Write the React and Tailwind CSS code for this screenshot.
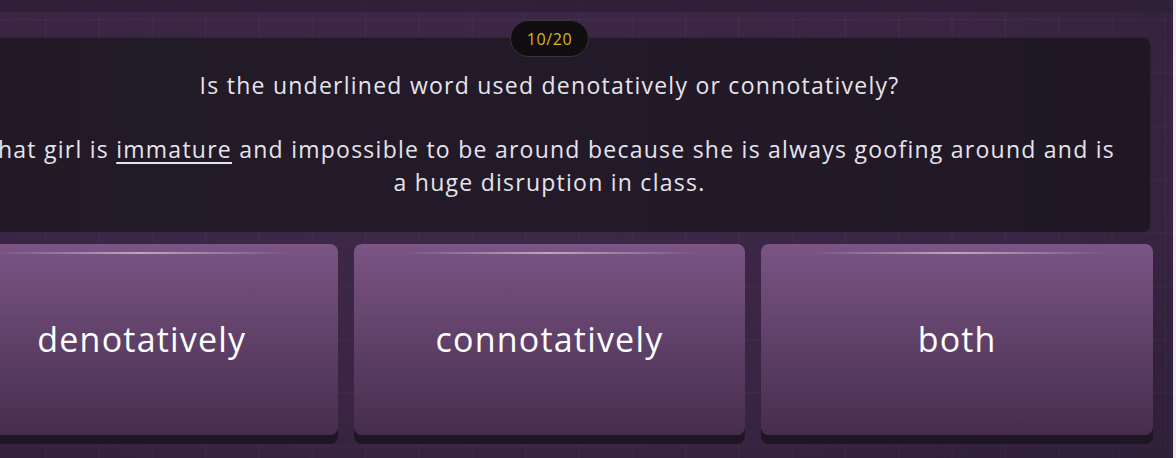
import React from "react";

const options = ["denotatively", "connotatively", "both"];

function Option({ label }) {
  return (
    <button className="relative h-[191px] rounded-[8px] bg-gradient-to-b from-[#7b5584] to-[#462e4f] text-[34px] tracking-[1.2px] text-white shadow-[0_9px_0_#1f1523]">
      <span className="absolute left-[12%] right-[12%] top-[8px] h-[2px] bg-gradient-to-r from-transparent via-white/50 to-transparent" />
      {label}
    </button>
  );
}

export default function App() {
  return (
    <div
      className="flex h-[458px] w-full overflow-hidden bg-[#3c2746] text-[#e7e3ea]"
      style={{ fontFamily: "'Open Sans', Lato, sans-serif" }}
    >
      <div className="relative flex-1 overflow-hidden">
        {/* grid + vignette */}
        <div className="absolute inset-0 bg-[linear-gradient(rgba(255,255,255,0.045)_1px,transparent_1px),linear-gradient(90deg,rgba(255,255,255,0.045)_1px,transparent_1px)] bg-[size:53.33px_53.33px] bg-[position:45px_19px]" />
        <div className="absolute inset-0 bg-[radial-gradient(ellipse_at_40%_35%,rgba(70,44,80,0.25)_0%,rgba(44,30,52,0.15)_60%,rgba(30,20,36,0.45)_100%)]" />
        <div className="absolute inset-x-0 top-0 h-[12px] bg-[#2e2036]/85" />

        <div className="relative ml-[-54px] w-[1207px] pt-[20px]">
          <div className="flex flex-col items-center">
            <div className="relative z-10 -mb-[19px] flex h-[37px] w-[79px] items-center justify-center rounded-full border border-[#3a3536] bg-[#100e10] text-[16px] tracking-[0.6px] text-[#dab61d]">
              10/20
            </div>
            <div className="mx-[3px] w-[1201px] self-start rounded-[7px] bg-gradient-to-r from-[#211a26] via-[#231a29] to-[#1f1824] px-[20px] pb-[33px] pt-[31px] text-center text-[23px] leading-[33px] tracking-[1.25px] shadow-[0_0_2px_rgba(0,0,0,0.4)]">
              <p>Is the underlined word used denotatively or connotatively?</p>
              <p className="mt-[31px] whitespace-nowrap">
                That girl is <span className="underline decoration-[2px] underline-offset-[4px]">immature</span> and impossible to be around because she is always goofing around and is
                <br />a huge disruption in class.
              </p>
            </div>
          </div>
          <div className="mt-[12px] grid grid-cols-3 gap-[16px]">
            {options.map((o) => (
              <Option key={o} label={o} />
            ))}
          </div>
        </div>
      </div>
      <div className="w-[3px] bg-[#ececee]" />
    </div>
  );
}
